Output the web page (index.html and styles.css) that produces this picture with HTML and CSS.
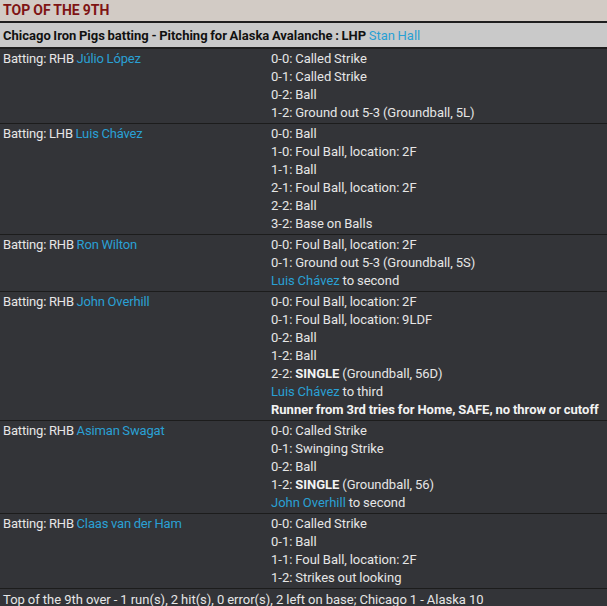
FILE: index.html
```html
<!DOCTYPE html>
<html>
<head>
<meta charset="utf-8">
<link rel="stylesheet" href="styles.css">
</head>
<body>
<div class="box">
  <div class="title">TOP OF THE 9TH</div>
  <div class="header">Chicago Iron Pigs batting - Pitching for Alaska Avalanche : LHP <a class="p">Stan Hall</a></div>

  <div class="ab">
    <div class="who">Batting: RHB <a class="p">Júlio López</a></div>
    <div class="plays">
      <div>0-0: Called Strike</div>
      <div>0-1: Called Strike</div>
      <div>0-2: Ball</div>
      <div>1-2: Ground out 5-3 (Groundball, 5L)</div>
    </div>
  </div>

  <div class="ab">
    <div class="who">Batting: LHB <a class="p">Luis Chávez</a></div>
    <div class="plays">
      <div>0-0: Ball</div>
      <div>1-0: Foul Ball, location: 2F</div>
      <div>1-1: Ball</div>
      <div>2-1: Foul Ball, location: 2F</div>
      <div>2-2: Ball</div>
      <div>3-2: Base on Balls</div>
    </div>
  </div>

  <div class="ab">
    <div class="who">Batting: RHB <a class="p">Ron Wilton</a></div>
    <div class="plays">
      <div>0-0: Foul Ball, location: 2F</div>
      <div>0-1: Ground out 5-3 (Groundball, 5S)</div>
      <div><a class="p">Luis Chávez</a> to second</div>
    </div>
  </div>

  <div class="ab">
    <div class="who">Batting: RHB <a class="p">John Overhill</a></div>
    <div class="plays">
      <div>0-0: Foul Ball, location: 2F</div>
      <div>0-1: Foul Ball, location: 9LDF</div>
      <div>0-2: Ball</div>
      <div>1-2: Ball</div>
      <div>2-2: <b>SINGLE</b> (Groundball, 56D)</div>
      <div><a class="p">Luis Chávez</a> to third</div>
      <div><b>Runner from 3rd tries for Home, SAFE, no throw or cutoff</b></div>
    </div>
  </div>

  <div class="ab">
    <div class="who">Batting: RHB <a class="p">Asiman Swagat</a></div>
    <div class="plays">
      <div>0-0: Called Strike</div>
      <div>0-1: Swinging Strike</div>
      <div>0-2: Ball</div>
      <div>1-2: <b>SINGLE</b> (Groundball, 56)</div>
      <div><a class="p">John Overhill</a> to second</div>
    </div>
  </div>

  <div class="ab">
    <div class="who">Batting: RHB <a class="p">Claas van der Ham</a></div>
    <div class="plays">
      <div>0-0: Called Strike</div>
      <div>0-1: Ball</div>
      <div>1-1: Foul Ball, location: 2F</div>
      <div>1-2: Strikes out looking</div>
    </div>
  </div>

  <div class="footer">Top of the 9th over - 1 run(s), 2 hit(s), 0 error(s), 2 left on base; Chicago 1 - Alaska 10</div>
</div>
</body>
</html>
```

FILE: styles.css
```css
html, body {
  margin: 0;
  padding: 0;
  background: #333438;
}
body {
  font-family: Roboto, "Noto Sans", sans-serif;
  font-size: 13px;
  color: #e6e6e6;
  word-spacing: -0.4px;
}
.box {
  width: 607px;
}
.title {
  height: 21px;
  line-height: 20px;
  background: #d2cbc5;
  color: #7f1414;
  font-weight: bold;
  font-size: 14px;
  padding-left: 3px;
  border-bottom: 2px solid #1e1e1e;
}
.header {
  height: 24px;
  line-height: 25px;
  background: #c9c9c9;
  color: #111;
  font-weight: bold;
  padding-left: 3px;
  border-bottom: 2px solid #1e1e1e;
  word-spacing: -0.6px;
}
.header .p { font-weight: normal; }
.p {
  color: #2aa0d4;
}
.ab {
  display: grid;
  grid-template-columns: 268px 1fr;
  padding: 1px 0 1px 3px;
  border-bottom: 1px solid #1c1c1c;
  line-height: 18px;
}
.who {
  letter-spacing: -0.15px;
}
.plays b {
  font-weight: bold;
  color: #f2f2f2;
}
.footer {
  padding: 2px 0 0 3px;
  line-height: 18px;
  word-spacing: -0.2px;
}
```
